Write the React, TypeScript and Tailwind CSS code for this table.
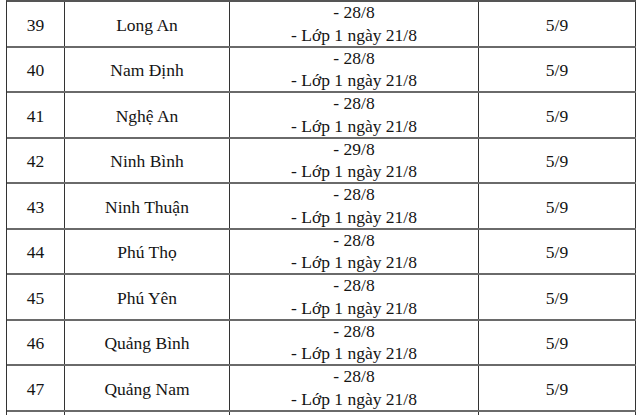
import React from "react";

const rows = [
  { n: "39", p: "Long An", d: "28/8", e: "5/9" },
  { n: "40", p: "Nam Định", d: "28/8", e: "5/9" },
  { n: "41", p: "Nghệ An", d: "28/8", e: "5/9" },
  { n: "42", p: "Ninh Bình", d: "29/8", e: "5/9" },
  { n: "43", p: "Ninh Thuận", d: "28/8", e: "5/9" },
  { n: "44", p: "Phú Thọ", d: "28/8", e: "5/9" },
  { n: "45", p: "Phú Yên", d: "28/8", e: "5/9" },
  { n: "46", p: "Quảng Bình", d: "28/8", e: "5/9" },
  { n: "47", p: "Quảng Nam", d: "28/8", e: "5/9" },
];

export default function App() {
  return (
    <div className="w-[640px] h-[415px] overflow-hidden bg-white pl-[6px] text-[#141414] text-[17.5px] leading-[22.5px] font-['Liberation_Serif','Times_New_Roman',serif]">
      <div className="w-[630px] border-t-2 border-t-[#555555] border-l border-l-[#333333] flex flex-col">
        {rows.map((r) => (
          <div key={r.n} className="flex h-[45.5px] border-b-2 border-[#6a6a6a] box-border">
            <div className="w-[58px] shrink-0 border-r border-[#333333] flex items-center justify-center pt-[2px]">
              {r.n}
            </div>
            <div className="w-[165px] shrink-0 border-r border-[#333333] flex items-center justify-center pt-[2px]">
              {r.p}
            </div>
            <div className="w-[249px] shrink-0 border-r border-[#333333] flex flex-col items-center justify-center">
              <div>- {r.d}</div>
              <div>- Lớp 1 ngày 21/8</div>
            </div>
            <div className="w-[157px] shrink-0 border-r border-[#333333] flex items-center justify-center pt-[2px]">
              {r.e}
            </div>
          </div>
        ))}
        <div className="flex h-[20px]">
          <div className="w-[58px] shrink-0 border-r border-[#333333]" />
          <div className="w-[165px] shrink-0 border-r border-[#333333]" />
          <div className="w-[249px] shrink-0 border-r border-[#333333]" />
          <div className="w-[157px] shrink-0 border-r border-[#333333]" />
        </div>
      </div>
    </div>
  );
}
